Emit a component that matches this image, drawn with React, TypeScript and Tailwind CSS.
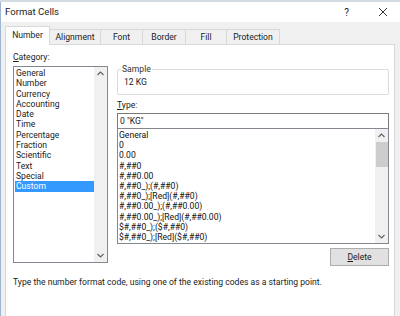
import React from "react";

const tabs = ["Number", "Alignment", "Font", "Border", "Fill", "Protection"];

const categories = [
  "General",
  "Number",
  "Currency",
  "Accounting",
  "Date",
  "Time",
  "Percentage",
  "Fraction",
  "Scientific",
  "Text",
  "Special",
  "Custom",
];

const formats = [
  "General",
  "0",
  "0.00",
  "#,##0",
  "#,##0.00",
  "#,##0_);(#,##0)",
  "#,##0_);[Red](#,##0)",
  "#,##0.00_);(#,##0.00)",
  "#,##0.00_);[Red](#,##0.00)",
  "$#,##0_);($#,##0)",
  "$#,##0_);[Red]($#,##0)",
];

function Up() {
  return (
    <svg width="7" height="5" viewBox="0 0 7 5" className="text-[#606060]">
      <path d="M0.5 4 L3.5 1 L6.5 4" fill="none" stroke="currentColor" strokeWidth="1.1" />
    </svg>
  );
}

function Down() {
  return (
    <svg width="7" height="5" viewBox="0 0 7 5" className="text-[#606060]">
      <path d="M0.5 1 L3.5 4 L6.5 1" fill="none" stroke="currentColor" strokeWidth="1.1" />
    </svg>
  );
}

function Scrollbar({ thumb }: { thumb: boolean }) {
  return (
    <div className="flex w-[13px] shrink-0 flex-col items-center bg-[#f0f0f0]">
      <div className="flex h-[13px] items-center justify-center">
        <Up />
      </div>
      {thumb ? <div className="h-[25px] w-[12px] bg-[#cdcdcd]" /> : null}
      <div className="flex-1" />
      <div className="flex h-[13px] items-center justify-center">
        <Down />
      </div>
    </div>
  );
}

export default function App() {
  return (
    <div
      className="flex h-[316px] w-[400px] flex-col overflow-hidden bg-[#f0f0f0] text-[8.6px] text-[#1b1b1b]"
      style={{ fontFamily: '"Segoe UI", Roboto, "Noto Sans", "Liberation Sans", sans-serif' }}
    >
      {/* desktop behind */}
      <div className="h-[2px] shrink-0 bg-[#d5dbe3]" />

      {/* title bar */}
      <div className="flex h-[20px] shrink-0 items-center border-l border-[#9fb6cf] bg-white pl-[4px] pr-[12px]">
        <span className="flex-1 text-[9.6px]">Format Cells</span>
        <span className="mr-[29px] text-[10px]">?</span>
        <svg width="10" height="10" viewBox="0 0 10 10">
          <path d="M1 1 L9 9 M9 1 L1 9" stroke="#222" strokeWidth="0.9" />
        </svg>
      </div>

      <div className="flex flex-1 flex-col border-l border-[#9fb6cf] pl-[4px] pr-[5px] pt-[4px]">
        {/* tabs */}
        <div className="flex h-[18px] shrink-0 items-end">
          {tabs.map((t, i) =>
            i === 0 ? (
              <div
                key={t}
                className="relative z-10 -mb-px flex h-[19px] w-[45px] items-center justify-center border border-b-0 border-[#d9d9d9] bg-white pb-[1px]"
              >
                {t}
              </div>
            ) : (
              <div
                key={t}
                className={`flex h-[15px] items-center justify-center border border-l-0 border-b-0 border-[#d9d9d9] bg-[#f0f0f0] ${
                  ["", "w-[51px]", "w-[42px]", "w-[43px]", "w-[41px]", "w-[53px]"][i]
                }`}
              >
                {t}
              </div>
            )
          )}
        </div>

        {/* panel */}
        <div className="flex flex-1 flex-col border border-b-0 border-[#d9d9d9] bg-white pl-[7px] pr-[5px] pt-[7px]">
          <div className="flex gap-[9px]">
            {/* category */}
            <div className="flex w-[95px] flex-col">
              <div className="h-[14px] leading-[10px]">
                <span className="underline">C</span>ategory:
              </div>
              <div className="flex h-[197px] border border-[#828790] bg-white">
                <div className="flex-1 pl-[1px] pt-[1px]">
                  {categories.map((c) => (
                    <div
                      key={c}
                      className={`h-[10.3px] pl-[1px] leading-[10.3px] ${
                        c === "Custom" ? "bg-[#3399ff] text-white" : ""
                      }`}
                    >
                      {c}
                    </div>
                  ))}
                </div>
                <Scrollbar thumb={false} />
              </div>
            </div>

            {/* right side */}
            <div className="mt-[13px] flex w-[272px] flex-col">
              <fieldset className="h-[30px] rounded-[2px] border border-[#dcdcdc] pl-[6px]">
                <legend className="-ml-[3px] px-[1px] leading-[8px] text-[#333]">Sample</legend>
                <div className="pt-[4px] leading-[10px]">12 KG</div>
              </fieldset>
              <div className="mt-[6px] h-[9px] leading-[9px]">
                <span className="underline">T</span>ype:
              </div>
              <div className="mt-[3px] flex h-[16px] items-center border border-[#7a7a7a] bg-white pl-[2px]">
                0 "KG"
              </div>
              <div className="-mt-px flex h-[116px] border border-[#828790] bg-white">
                <div className="flex-1 pl-[1px] pt-[1px] text-[#111]">
                  {formats.map((f) => (
                    <div key={f} className="h-[10.2px] leading-[10.2px]">
                      {f}
                    </div>
                  ))}
                </div>
                <Scrollbar thumb />
              </div>
              <div className="mt-[4px] flex justify-end">
                <div className="flex h-[18px] w-[59px] items-center justify-center border border-[#adadad] bg-[#e1e1e1]">
                  <span className="underline">D</span>elete
                </div>
              </div>
            </div>
          </div>

          <div className="mt-[11px] leading-[10px]">
            Type the number format code, using one of the existing codes as a starting point.
          </div>
        </div>
      </div>
    </div>
  );
}
